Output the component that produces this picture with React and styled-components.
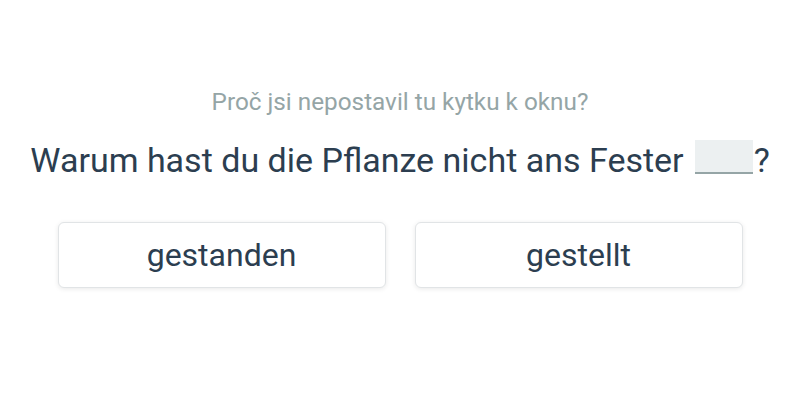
import React from 'react';
import styled, { createGlobalStyle } from 'styled-components';

const GlobalStyle = createGlobalStyle`
  html, body {
    margin: 0;
    padding: 0;
    background: #ffffff;
    font-family: Roboto, "Noto Sans", sans-serif;
  }
`;

const Page = styled.div`
  width: 800px;
  height: 400px;
  display: flex;
  flex-direction: column;
  align-items: center;
  padding-top: 88px;
  box-sizing: border-box;
`;

const Translation = styled.div`
  color: #95a5a6;
  font-size: 24.3px;
  line-height: 28px;
`;

const Sentence = styled.div`
  color: #2c3e50;
  font-size: 34px;
  line-height: 40px;
  margin-top: 24px;
  display: flex;
  align-items: center;
`;

const Blank = styled.span`
  display: inline-block;
  width: 58px;
  height: 32px;
  background: #ecf0f1;
  border-bottom: 2px solid #95a5a6;
  margin: 0 1px 0 11px;
  position: relative;
  top: -3px;
`;

const Options = styled.div`
  display: flex;
  gap: 29px;
  margin-top: 42px;
`;

const OptionButton = styled.button`
  width: 328px;
  height: 66px;
  background: #ffffff;
  border: 1px solid #e1e4e6;
  border-radius: 6px;
  box-shadow: 0 1px 5px rgba(0, 0, 0, 0.09);
  color: #2c3e50;
  font-family: Roboto, "Noto Sans", sans-serif;
  font-size: 32px;
  cursor: pointer;
`;

const options = ['gestanden', 'gestellt'];

export default function App() {
  return (
    <>
      <GlobalStyle />
      <Page>
        <Translation>Proč jsi nepostavil tu kytku k oknu?</Translation>
        <Sentence>
          Warum hast du die Pflanze nicht ans Fester<Blank />?
        </Sentence>
        <Options>
          {options.map(o => (
            <OptionButton key={o}>{o}</OptionButton>
          ))}
        </Options>
      </Page>
    </>
  );
}
